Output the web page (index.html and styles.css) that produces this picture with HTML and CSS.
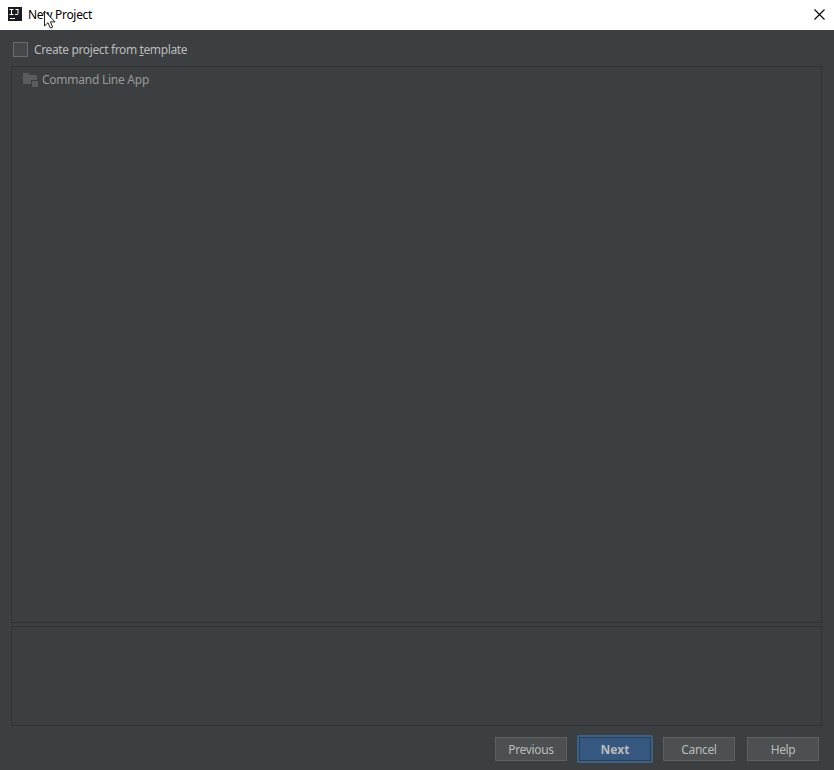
FILE: index.html
```html
<!DOCTYPE html>
<html lang="en">
<head>
<meta charset="utf-8">
<title>New Project</title>
<link rel="stylesheet" href="styles.css">
</head>
<body>
<div class="dialog">
  <header class="titlebar">
    <svg class="logo" width="14" height="14" viewBox="0 0 14 14"><rect width="14" height="14" fill="#1b1b1f"/><path d="M1.500 2.500h4M3.500 2.500v5M1.500 7.500h4M7.500 2.500h3M10 2.500v4q0 1-1 1h-2M2 11.500h5" stroke="#fff" fill="none"/></svg>
    <span class="title">New Project</span>
    <svg class="close" width="11" height="11" viewBox="0 0 11 11"><path d="M.5.5l10 10M10.500.5l-10 10" stroke="#000" stroke-width="1.100"/></svg>
    <svg class="cursor" width="13" height="20" viewBox="0 0 13 20"><path d="M.5 1v15l3.500-3.300 2.300 5.400 2.400-1-2.300-5.200h4.700z" fill="#fff" stroke="#222" stroke-width="1"/></svg>
  </header>
  <main class="content">
    <label class="option"><span class="checkbox"></span><span class="option-text">Create project from <u>t</u>emplate</span></label>
    <section class="templates">
      <div class="template">
        <svg width="16" height="14" viewBox="0 0 16 14"><path d="M0 0h5l2 2h7v5H8v4H0z" fill="#5a5d5d"/><path d="M9 8h6v6H9z" fill="#5a5d5d"/></svg>
        <span class="template-text">Command Line App</span>
      </div>
    </section>
    <section class="description"></section>
  </main>
  <footer class="actions">
    <button class="button">Previous</button>
    <button class="button primary">Next</button>
    <button class="button">Cancel</button>
    <button class="button">Help</button>
  </footer>
</div>
</body>
</html>
```
FILE: styles.css
```css
* { box-sizing: border-box; }
body {
  margin: 0;
  background: #3c3f41;
  font: 12px/16px "Noto Sans", "Open Sans", sans-serif;
}
.dialog { height: 770px; display: flex; flex-direction: column; }
.titlebar {
  position: relative;
  height: 30px;
  flex: none;
  display: flex;
  align-items: center;
  padding: 0 9px 0 8px;
  background: #fff;
  color: #000;
}
.logo { margin: -2px 6px 0 0; }
.title { letter-spacing: -0.3px; }
.close { margin: -2px 0 0 auto; }
.cursor { position: absolute; left: 44px; top: 10px; }
.content { flex: none; padding: 12px 12px 0 11px; color: #bbb; }
.option { display: flex; align-items: center; height: 15px; padding-left: 2px; }
.checkbox { width: 15px; height: 15px; border: 1px solid #6b6b6b; background: #43494a; margin-right: 6px; }
.option-text { letter-spacing: -0.37px; }
.option u { text-underline-offset: 1px; text-decoration-skip-ink: none; }
.templates { height: 557px; margin-top: 9px; padding: 5px 11px; border: 1px solid #323232; }
.template { display: flex; align-items: center; gap: 3px; color: #999; }
.template svg { flex: none; }
.template-text { letter-spacing: -0.25px; }
.description { height: 100px; margin-top: 3px; border: 1px solid #323232; }
.actions { display: flex; justify-content: flex-end; align-items: center; height: 28px; margin-top: 9px; padding-right: 15px; }
.button {
  width: 72px;
  height: 24px;
  margin-left: 12px;
  padding: 2px 0 0;
  border: 1px solid #5e6060;
  background: #4c5052;
  color: #bbb;
  font: inherit;
  letter-spacing: -0.35px;
}
.primary {
  width: 76px;
  height: 28px;
  margin: 0 -2px 0 10px;
  border: 2px solid #3d6185;
  border-radius: 2px;
  background: #365880;
  box-shadow: inset 0 0 0 1px #2c3e55;
  font-weight: bold;
  letter-spacing: 0;
}
```
